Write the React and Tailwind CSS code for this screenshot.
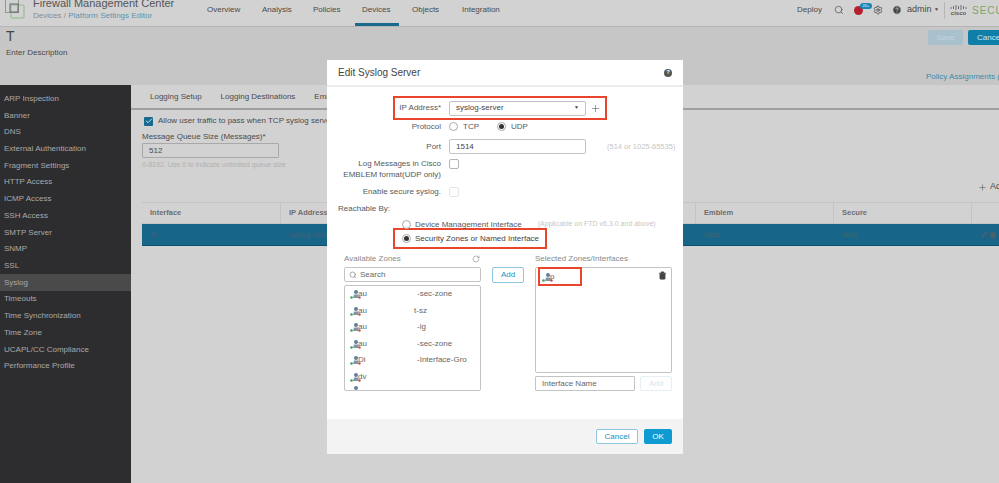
import { Search, Settings, Plus, RotateCw, Trash2, Pencil, Check, CircleHelp } from "lucide-react";

const font = { fontFamily: '"Liberation Sans", Arial, sans-serif' };

const sideItems = [
  "ARP Inspection", "Banner", "DNS", "External Authentication", "Fragment Settings", "HTTP Access",
  "ICMP Access", "SSH Access", "SMTP Server", "SNMP", "SSL", "Syslog", "Timeouts",
  "Time Synchronization", "Time Zone", "UCAPL/CC Compliance", "Performance Profile",
];

const navItems = [
  { label: "Overview", cls: "w-[55px]" },
  { label: "Analysis", cls: "w-[51px]" },
  { label: "Policies", cls: "w-[49px]" },
  { label: "Devices", cls: "w-[50px]", active: true },
  { label: "Objects", cls: "w-[50px]" },
  { label: "Integration", cls: "w-[60px]" },
];

const zones = [
  { a: "au", b: "-sec-zone" },
  { a: "au", b: "t-sz", tight: true },
  { a: "au", b: "-ig" },
  { a: "au", b: "-sec-zone" },
  { a: "Di", b: "-Interface-Group" },
  { a: "dv", b: "" },
];

function ZoneIcon() {
  return (
    <svg width="11" height="10" viewBox="0 0 11 10" className="shrink-0">
      <circle cx="6" cy="3" r="2" fill="#5f7f9c" />
      <path d="M3 9 L4 5.500 H8 L9 9 Z" fill="#7d97ad" />
      <circle cx="1.500" cy="8.500" r="1.300" fill="#4c9f50" />
      <circle cx="9.500" cy="8.500" r="1.200" fill="#c9544a" />
    </svg>
  );
}

function Radio({ on }) {
  return (
    <span className="w-[9px] h-[9px] rounded-full border border-[#a9a9a9] bg-white flex items-center justify-center shrink-0">
      {on && <span className="w-[5px] h-[5px] rounded-full bg-[#333]" />}
    </span>
  );
}

function Modal() {
  return (
    <div className="absolute left-[327px] top-[60px] w-[356px] h-[394px] bg-white flex flex-col text-[#55595c] text-[8px] whitespace-nowrap">
      <div className="h-[27px] shrink-0 flex items-center justify-between pl-[11px] pr-[11px] border-b-[2px] border-[#ececec]">
        <span className="text-[10px] text-[#444]">Edit Syslog Server</span>
        <span className="w-[8px] h-[8px] rounded-full bg-[#555] text-white text-[6px] font-bold flex items-center justify-center">?</span>
      </div>

      <div className="flex-1 relative">
        {/* form rows */}
        <div className="pt-[9px] pl-[66px]">
          <div className="w-[214px] h-[24px] border-2 border-[#e8452c] flex items-center">
            <span className="w-[46px] text-right shrink-0">IP Address*</span>
            <span className="ml-[8px] w-[137px] h-[15px] border border-[#c4c4c4] rounded-[2px] flex items-center justify-between px-[6px] text-[#444]">
              syslog-server
              <span className="text-[5px]">▼</span>
            </span>
            <Plus size={11} strokeWidth={1.2} className="ml-[4px] text-[#555]" />
          </div>

          <div className="flex items-center h-[11px] mt-[1px]">
            <span className="w-[48px] text-right">Protocol</span>
            <span className="ml-[8px] flex items-center gap-[5px] w-[48px]"><Radio /> TCP</span>
            <span className="flex items-center gap-[5px]"><Radio on /> UDP</span>
          </div>

          <div className="flex items-center h-[15px] mt-[7px]">
            <span className="w-[48px] text-right">Port</span>
            <span className="ml-[8px] w-[137px] h-[15px] border border-[#c4c4c4] rounded-[2px] flex items-center px-[6px] text-[#444]">1514</span>
            <span className="ml-[21px] text-[7.5px] text-[#c6c6c6]">(514 or 1025-65535)</span>
          </div>

          <div className="flex items-start mt-[5px]">
            <span className="w-[48px] flex justify-end">
              <span className="text-right leading-[10.5px]">Log Messages in Cisco<br />EMBLEM format(UDP only)</span>
            </span>
            <span className="ml-[8px] w-[10px] h-[10px] border border-[#b5b5b5] rounded-[2px]" />
          </div>

          <div className="flex items-center mt-[7px] h-[10px]">
            <span className="w-[48px] flex justify-end">Enable secure syslog.</span>
            <span className="ml-[8px] w-[10px] h-[10px] border border-[#e4e4e4] rounded-[2px]" />
          </div>
        </div>

        <div className="pl-[11px] mt-[6px] leading-[11px]">Reachable By:</div>

        <div className="pl-[66px]">
          <div className="flex items-center h-[11px] mt-[5px] pl-[9px] gap-[4px]">
            <Radio />
            <span>Device Management Interface</span>
            <span className="ml-[12px] text-[7px] text-[#c6c6c6]">(Applicable on FTD v6.3.0 and above)</span>
          </div>
          <div className="w-[154px] h-[21px] -mt-[2px] border-2 border-[#e8452c] flex items-center pl-[7px] gap-[4px]">
            <Radio on />
            <span className="text-[#444]">Security Zones or Named Interface</span>
          </div>
        </div>

        {/* zones */}
        <div className="flex pl-[17px] mt-[4px]">
          <div className="w-[137px]">
            <div className="flex items-center justify-between h-[12px] pr-[1px] text-[#8a8a8a]">
              Available Zones
              <RotateCw size={8} strokeWidth={1.500} className="text-[#777]" />
            </div>
            <div className="mt-[2px] h-[15px] border border-[#c4c4c4] rounded-[2px] flex items-center pl-[4px] gap-[3px] text-[#666]">
              <Search size={8} strokeWidth={1.600} />
              Search
            </div>
            <div className="mt-[3px] h-[106px] border border-[#c4c4c4] rounded-[2px] overflow-hidden pl-[5px]">
              {zones.map((z, i) => (
                <div key={i} className="h-[16.5px] flex items-center text-[#666]">
                  <ZoneIcon />
                  <span className="w-[10px] -ml-[3px] overflow-hidden shrink-0">{z.a}</span>
                  <span className={`overflow-hidden ${z.tight ? "ml-[46px]" : "ml-[49px] w-[50px]"}`}>{z.b}</span>
                </div>
              ))}
              <ZoneIcon />
            </div>
          </div>

          <div className="w-[32px] h-[16px] ml-[11px] mt-[14px] border border-[#8cc7df] rounded-[2px] text-[#1b8fbd] flex items-center justify-center">Add</div>

          <div className="w-[137px] ml-[11px]">
            <div className="h-[12px] flex items-center text-[#8a8a8a]">Selected Zones/Interfaces</div>
            <div className="mt-[2px] h-[106px] border border-[#c4c4c4] rounded-[2px] relative">
              <div className="w-[44px] h-[19px] ml-[2px] -mt-[1px] border-2 border-[#e8452c] flex items-center pl-[2px] text-[#666]">
                <ZoneIcon />
                <span className="-ml-[3px]">p</span>
              </div>
              <Trash2 size={9} fill="#444" strokeWidth={1.400} className="absolute right-[4px] top-[3px] text-[#444]" />
            </div>
            <div className="flex mt-[3px] gap-[5px]">
              <div className="w-[100px] h-[15px] border border-[#c4c4c4] rounded-[1px] flex items-center px-[6px] text-[#666]">Interface Name</div>
              <div className="w-[32px] h-[15px] border border-[#e4f0f5] rounded-[2px] text-[#d9e6ec] flex items-center justify-center">Add</div>
            </div>
          </div>
        </div>
      </div>

      <div className="h-[35px] shrink-0 bg-[#f3f3f3] flex items-center justify-end gap-[6px] pr-[11px]">
        <span className="w-[42px] h-[15px] bg-white border border-[#8cc7df] rounded-[2px] text-[#1b8fbd] flex items-center justify-center">Cancel</span>
        <span className="w-[28px] h-[15px] bg-[#0d9bd2] rounded-[2px] text-white flex items-center justify-center">OK</span>
      </div>
    </div>
  );
}

export default function App() {
  const cols = ["Interface", "IP Address", "", "", "Emblem", "Secure", ""];
  const vals = ["in", "syslog-server", "", "", "false", "false"];

  return (
    <div style={font} className="relative w-[999px] h-[483px] overflow-hidden bg-[#d2d2d2] text-[#4a4a4a] flex flex-col">
      {/* top bar */}
      <header className="h-[27px] shrink-0 border-b border-[#b5b5b5] flex items-center text-[8px]">
        <svg width="21" height="21" viewBox="0 0 21 21" className="ml-[5px] -mt-[7px] shrink-0">
          <rect x="0.500" y="0.500" width="13" height="13" fill="none" stroke="#8e9a8e" />
          <rect x="6" y="6" width="13" height="13" rx="1" fill="none" stroke="#8cb98c" />
          <rect x="5" y="5" width="8" height="8" fill="none" stroke="#666" />
        </svg>
        <div className="ml-[7px] w-[174px] -mt-[9px] shrink-0 whitespace-nowrap">
          <div className="text-[11px] leading-[13px] text-[#555]">Firewall Management Center</div>
          <div className="text-[8px] leading-[11px] text-[#8a8a8a]">
            Devices / <span className="text-[#5f93ab]">Platform Settings Editor</span>
          </div>
        </div>
        <nav className="flex h-full">
          {navItems.map((n) => (
            <div key={n.label} className={`${n.cls} h-full flex items-center pb-[6px] relative whitespace-nowrap`}>
              {n.label}
              {n.active && <span className="absolute -left-[7px] top-[23px] w-[44px] h-[3px] bg-[#1a6a8f]" />}
            </div>
          ))}
        </nav>
        <div className="ml-auto flex items-center h-full pb-[6px]">
          <span className="w-[25px]">Deploy</span>
          <Search size={10} strokeWidth={1.600} className="ml-[12px]" />
          <span className="ml-[10px] w-[9px] h-[9px] rounded-full bg-[#b5202e] relative">
            <span className="absolute left-[6px] -top-[3px] w-[12px] h-[6px] rounded-full bg-[#1a86b8] text-white text-[4px] leading-[6px] text-center">20+</span>
          </span>
          <Settings size={10} strokeWidth={2} className="ml-[10px]" />
          <CircleHelp size={10} fill="#444" stroke="#d2d2d2" className="ml-[9px]" />
          <span className="ml-[5px] w-[31px] text-[9px] whitespace-nowrap">admin <span className="text-[5px] align-[1px]">▼</span></span>
          <span className="ml-[6px] w-px h-[17px] bg-[#b5b5b5]" />
          <span className="ml-[5px] w-[17px] flex flex-col items-center leading-none text-[#555]">
            <svg width="17" height="5" viewBox="0 0 17 5" stroke="#555" strokeWidth="0.800">
              <path d="M1 2v2M3.500 1v3M6 0v5M8.500 1v3M11 0v5M13.500 1v3M16 2v2" />
            </svg>
            <span className="text-[6px] font-bold">cisco</span>
          </span>
          <span className="ml-[5px] w-[27px] overflow-hidden text-[10px] tracking-[1px] text-[#7da56d]">SECURE</span>
        </div>
      </header>

      {/* page title strip */}
      <div className="h-[58px] shrink-0 bg-[#c6c6c6] relative pl-[6px] flex flex-col">
        <div className="text-[14px] leading-[16px] mt-[1px] text-[#444]">T</div>
        <div className="text-[8px] leading-[11px] mt-[3px]">Enter Description</div>
        <div className="absolute right-0 top-[3px] flex gap-[5px] text-[8px]">
          <span className="w-[35px] h-[15px] rounded-[2px] bg-[#a9c1cd] text-[#c6d4db] flex items-center justify-center">Save</span>
          <span className="w-[31px] h-[15px] overflow-hidden rounded-l-[2px] bg-[#0f7ea9] text-[#d5e6ee] flex items-center pl-[9px]">Cancel</span>
        </div>
        <div className="absolute left-[926px] top-[44px] text-[8px] text-[#3c8bb0] whitespace-nowrap">Policy Assignments (1)</div>
      </div>

      <div className="flex-1 flex min-h-0">
        <aside className="w-[131px] shrink-0 bg-[#2d2d2f] text-[#a9a9a9] text-[8px] pt-[5.5px]">
          {sideItems.map((s) => (
            <div key={s} className={`h-[16.72px] flex items-center pl-[4px] ${s === "Syslog" ? "bg-[#4a4a4b]" : ""}`}>{s}</div>
          ))}
        </aside>

        <main className="flex-1 min-w-0 overflow-hidden">
          <div className="h-[25px] flex items-center gap-[19px] pl-[19px] pt-[1px] border-b-[2px] border-[#a0a0a0] text-[8px] whitespace-nowrap">
            <span>Logging Setup</span>
            <span>Logging Destinations</span>
            <span>Email Setup</span>
          </div>
          <div className="pl-[11px]">
            <div className="flex items-center gap-[5px] mt-[6px] h-[10px] pl-[2px] text-[8px] whitespace-nowrap">
              <span className="w-[9px] h-[9px] rounded-[1px] bg-[#17698f] flex items-center justify-center">
                <Check size={8} strokeWidth={3} className="text-[#d5e6ee]" />
              </span>
              Allow user traffic to pass when TCP syslog server is down
            </div>
            <div className="mt-[5px] text-[8px] leading-[11px]">Message Queue Size (Messages)*</div>
            <div className="mt-[1px] w-[137px] h-[15px] border border-[#a9a9a9] rounded-[1px] flex items-center pl-[6px] text-[8px]">512</div>
            <div className="mt-[2px] text-[7px] leading-[10px] text-[#b0b0b0] whitespace-nowrap">0-8192. Use 0 to indicate unlimited queue size</div>

            <div className="h-[12px] flex items-center justify-end mt-[11px] text-[9px] whitespace-nowrap">
              <Plus size={9} strokeWidth={1.400} className="mr-[3px]" />
              <span className="w-[9px] overflow-hidden">Add</span>
            </div>

            {/* table */}
            <div className="w-[900px] mt-[9px]">
              <div className="grid grid-cols-[138px_138px_138px_139px_138px_138px_71px] h-[22px] border-y border-[#c4c4c4] text-[7.5px] font-bold text-[#6e6e6e]">
                {cols.map((c, i) => (
                  <div key={i} className={`flex items-center pl-[8px] border-[#c4c4c4] ${i > 0 ? "border-l" : ""}`}>{c}</div>
                ))}
              </div>
              <div className="grid grid-cols-[138px_138px_138px_139px_138px_138px_71px] h-[22px] bg-[#18658a] border-b border-[#0f4f70] text-[7.5px] text-[#49606e]">
                {vals.map((c, i) => (
                  <div key={i} className="flex items-center pl-[9px]">{c}</div>
                ))}
                <div className="flex items-center pl-[10px] gap-[1px] text-[#49606e]">
                  <Pencil size={7} fill="#49606e" />
                  <Trash2 size={8} fill="#49606e" />
                </div>
              </div>
            </div>
          </div>
        </main>
      </div>

      <Modal />
    </div>
  );
}
